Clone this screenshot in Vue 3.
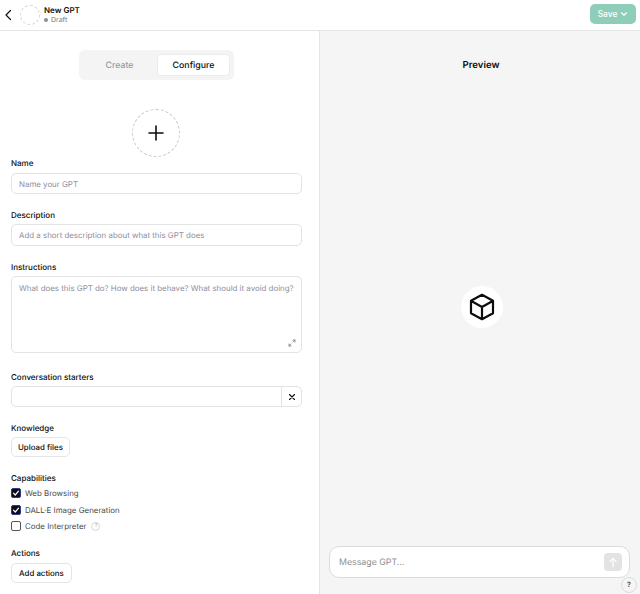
<script setup>
const capabilities = [
  { name: "Web Browsing", checked: true },
  { name: "DALL·E Image Generation", checked: true },
  { name: "Code Interpreter", checked: false, hint: true }
];
</script>

<template>
  <div class="page">
    <header class="top">
      <div class="top-left">
        <svg class="back" width="12" height="14" viewBox="0 0 12 14" fill="none">
          <path d="M8.5 2.5 L4 7 L8.5 11.5" stroke="#111" stroke-width="1.2" stroke-linecap="round" stroke-linejoin="round" />
        </svg>
        <div class="mini-avatar"></div>
        <div class="title">
          <div class="title-name">New GPT</div>
          <div class="title-status"><span class="dot"></span>Draft</div>
        </div>
      </div>
      <button class="save">
        Save
        <svg width="8" height="8" viewBox="0 0 8 8" fill="none">
          <path d="M1.5 2.8 L4 5.2 L6.5 2.8" stroke="#fff" stroke-width="1.2" stroke-linecap="round" stroke-linejoin="round" />
        </svg>
      </button>
    </header>

    <div class="columns">
      <section class="editor">
        <div class="tabs-row">
          <div class="tabs">
            <div class="tab">Create</div>
            <div class="tab active">Configure</div>
          </div>
        </div>

        <div class="avatar-row">
          <div class="avatar">
            <svg width="16" height="16" viewBox="0 0 16 16" fill="none">
              <path d="M8 1 V15 M1 8 H15" stroke="#0d0d0d" stroke-width="1.6" stroke-linecap="round" />
            </svg>
          </div>
        </div>

        <div class="field name-field">
          <label>Name</label>
          <div class="input">Name your GPT</div>
        </div>

        <div class="field">
          <label>Description</label>
          <div class="input tall">Add a short description about what this GPT does</div>
        </div>

        <div class="field">
          <label>Instructions</label>
          <div class="input textarea">
            What does this GPT do? How does it behave? What should it avoid doing?
            <svg class="expand" width="8" height="8" viewBox="0 0 8 8" fill="none">
              <path d="M5 1 H7 V3 M5 3 L7 1 M3 7 H1 V5 M3 5 L1 7" stroke="#777" stroke-width="0.8" stroke-linecap="round" stroke-linejoin="round" />
            </svg>
          </div>
        </div>

        <div class="field starters">
          <label>Conversation starters</label>
          <div class="input starter">
            <div class="starter-text"></div>
            <div class="starter-x">
              <svg width="8" height="8" viewBox="0 0 8 8" fill="none">
                <path d="M1.5 1.5 L6.5 6.5 M6.5 1.5 L1.5 6.5" stroke="#111" stroke-width="1.1" stroke-linecap="round" />
              </svg>
            </div>
          </div>
        </div>

        <div class="field">
          <label>Knowledge</label>
          <button class="small-btn upload">Upload files</button>
        </div>

        <div class="field caps-field">
          <label>Capabilities</label>
          <div class="caps">
            <div v-for="cap in capabilities" :key="cap.name" class="cap">
              <span class="box" :class="{ on: cap.checked }">
                <svg v-if="cap.checked" width="8" height="8" viewBox="0 0 8 8" fill="none">
                  <path d="M1.5 4.2 L3.3 6 L6.5 2.2" stroke="#fff" stroke-width="1.2" stroke-linecap="round" stroke-linejoin="round" />
                </svg>
              </span>
              <span>{{ cap.name }}</span>
              <span v-if="cap.hint" class="hint">?</span>
            </div>
          </div>
        </div>

        <div class="field actions">
          <label>Actions</label>
          <button class="small-btn">Add actions</button>
        </div>
      </section>

      <section class="preview">
        <div class="preview-title">Preview</div>
        <div class="preview-mid">
          <div class="logo">
            <svg width="28" height="28" viewBox="0 0 28 28" fill="none">
              <path d="M14 1.8 L25 7.8 V20.2 L14 26.2 L3 20.2 V7.8 Z M3.3 8 L14 14 L24.7 8 M14 14 V25.8" stroke="#0d0d0d" stroke-width="2.2" stroke-linejoin="round" stroke-linecap="round" />
            </svg>
          </div>
        </div>
        <div class="composer">
          <span>Message GPT...</span>
          <div class="send">
            <svg width="10" height="11" viewBox="0 0 10 11" fill="none">
              <path d="M5 9.5 V1.5 M1.8 4.6 L5 1.4 L8.2 4.6" stroke="#fff" stroke-width="1.2" stroke-linecap="round" stroke-linejoin="round" />
            </svg>
          </div>
        </div>
        <div class="help">?</div>
      </section>
    </div>
  </div>
</template>

<style>
html, body {
  margin: 0;
  background: #fff;
}
</style>

<style scoped>
.page {
  width: 640px;
  height: 594px;
  overflow: hidden;
  display: flex;
  flex-direction: column;
  font-family: Inter, "Liberation Sans", sans-serif;
  font-size: 7.9px;
  text-rendering: geometricPrecision;
  color: #0d0d0d;
}

.top {
  height: 31px;
  box-sizing: border-box;
  flex-shrink: 0;
  display: flex;
  align-items: center;
  justify-content: space-between;
  padding: 0 4px 0 2px;
  border-bottom: 1px solid #e5e5e5;
}

.top-left {
  display: flex;
  align-items: center;
  margin-bottom: 1px;
}

.back {
  margin-right: 6px;
}

.mini-avatar {
  width: 20px;
  height: 20px;
  box-sizing: border-box;
  border: 1px dashed #d0d0d0;
  border-radius: 50%;
  margin-right: 4px;
}

.title-name {
  font-weight: 600;
  font-size: 8px;
  line-height: 10px;
}

.title-status {
  font-size: 7px;
  line-height: 10px;
  color: #777;
  display: flex;
  align-items: center;
}

.dot {
  width: 4px;
  height: 4px;
  border-radius: 50%;
  background: #8e8e8e;
  margin-right: 3px;
}

.save {
  width: 46px;
  height: 20px;
  margin-bottom: 2px;
  padding: 0;
  border: none;
  border-radius: 5px;
  background: #8ecdb9;
  color: #fff;
  font: 500 8.4px Inter, "Liberation Sans", sans-serif;
  display: flex;
  align-items: center;
  justify-content: center;
  gap: 3px;
}

.columns {
  flex: 1;
  display: flex;
  min-height: 0;
}

.editor {
  width: 320px;
  box-sizing: border-box;
  padding: 19px 17px 0 11px;
  border-right: 1px solid #e5e5e5;
}

.tabs-row {
  display: flex;
  justify-content: center;
}

.tabs {
  width: 155px;
  height: 30px;
  box-sizing: border-box;
  padding: 4px;
  border-radius: 6px;
  background: #f4f4f4;
  display: flex;
  justify-content: space-between;
}

.tab {
  width: 73px;
  display: flex;
  align-items: center;
  justify-content: center;
  font-weight: 500;
  font-size: 8.8px;
  color: #9b9b9b;
}

.tab.active {
  background: #fff;
  color: #0d0d0d;
  border-radius: 4px;
  border: 1px solid #ececec;
  box-sizing: border-box;
}

.avatar-row {
  display: flex;
  justify-content: center;
  margin-top: 29px;
  padding-right: 1px;
}

.avatar {
  width: 48px;
  height: 48px;
  box-sizing: border-box;
  border: 1px dashed #c8c8c8;
  border-radius: 50%;
  display: flex;
  align-items: center;
  justify-content: center;
}

.field {
  margin-top: 16px;
}

.name-field {
  margin-top: 0;
  padding-top: 1px;
}

.field label {
  display: block;
  font-weight: 500;
  font-size: 8px;
  line-height: 11px;
  margin-bottom: 3px;
}

.name-field label,
.actions label {
  margin-bottom: 4px;
}

.input {
  height: 21px;
  box-sizing: border-box;
  border: 1px solid #e3e3e3;
  border-radius: 5px;
  padding: 0 7px;
  display: flex;
  align-items: center;
  color: #8e8ea0;
  background: #fff;
}

.input.tall {
  height: 22px;
}

.textarea {
  height: 77px;
  position: relative;
  align-items: flex-start;
  padding-top: 5px;
  line-height: 13px;
  white-space: nowrap;
}

.expand {
  position: absolute;
  right: 5px;
  bottom: 5px;
}

.starters {
  margin-top: 19px;
}

.starter {
  padding: 0;
}

.starter-text {
  flex: 1;
}

.starter-x {
  width: 19px;
  height: 100%;
  border-left: 1px solid #e3e3e3;
  display: flex;
  align-items: center;
  justify-content: center;
}

.small-btn {
  display: block;
  height: 20px;
  padding: 0 7px;
  border: 1px solid #e5e5e5;
  border-radius: 5px;
  background: #fff;
  color: #0d0d0d;
  font: 500 7.9px Inter, "Liberation Sans", sans-serif;
  text-rendering: geometricPrecision;
}

.small-btn.upload {
  padding: 0 6px;
}

.caps {
  margin-top: -2px;
}

.cap {
  height: 16.5px;
  display: flex;
  align-items: center;
  color: #4a4a4a;
}

.box {
  width: 10px;
  height: 10px;
  box-sizing: border-box;
  margin-right: 4px;
  border: 1px solid #555;
  border-radius: 2px;
  display: flex;
  align-items: center;
  justify-content: center;
}

.box.on {
  background: #0d0d1a;
  border-color: #2d3a8c;
}

.hint {
  width: 7px;
  height: 7px;
  margin-left: 5px;
  border: 1px solid #d5d5d5;
  border-radius: 50%;
  font-size: 5px;
  line-height: 7px;
  text-align: center;
  color: #aaa;
}

.actions {
  margin-top: 13px;
}

.preview {
  flex: 1;
  position: relative;
  background: #f5f5f5;
  display: flex;
  flex-direction: column;
  padding: 0 10px 16px 9px;
}

.preview-title {
  text-align: center;
  font-weight: 600;
  font-size: 9.6px;
  line-height: 14px;
  padding-top: 28px;
  padding-left: 3px;
}

.preview-mid {
  flex: 1;
  display: flex;
  align-items: center;
  justify-content: center;
  padding: 0 0 6px 4px;
}

.logo {
  width: 42px;
  height: 42px;
  border-radius: 50%;
  background: #fff;
  display: flex;
  align-items: center;
  justify-content: center;
}

.composer {
  height: 32px;
  box-sizing: border-box;
  border: 1px solid #dcdcdc;
  border-radius: 10px;
  background: #fff;
  padding: 0 7px 0 9px;
  display: flex;
  align-items: center;
  justify-content: space-between;
  font-size: 8.8px;
  color: #8e8e8e;
}

.send {
  width: 18px;
  height: 18px;
  border-radius: 4px;
  background: #e3e3e3;
  display: flex;
  align-items: center;
  justify-content: center;
}

.help {
  position: absolute;
  right: 3px;
  bottom: 1px;
  width: 16px;
  height: 16px;
  box-sizing: border-box;
  border: 1px solid #dcdcdc;
  border-radius: 50%;
  font-size: 7px;
  font-weight: 600;
  line-height: 14px;
  text-align: center;
  color: #444;
}
</style>
